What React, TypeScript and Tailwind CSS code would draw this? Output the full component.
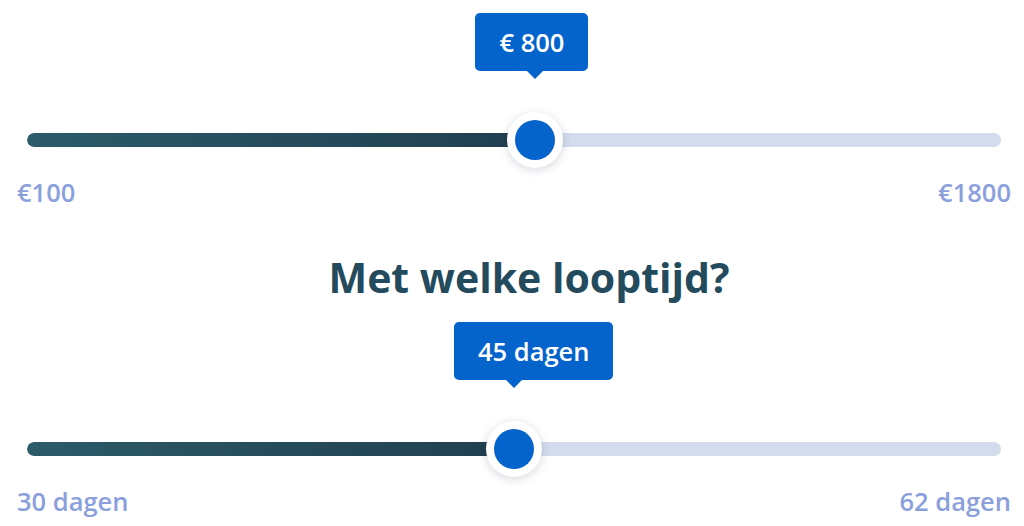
import React from 'react';

type SliderProps = {
    value: string;
    pct: number;
    min: string;
    max: string;
};

const Slider = ({ value, pct, min, max }: SliderProps) => {
    return (
        <div>
            <div className="relative mx-[10px] h-[56px] flex items-center">
                {/* Track */}
                <div className="w-full h-[14px] rounded-full bg-[#d3dcec] overflow-hidden">
                    <div
                        className="h-full rounded-full bg-gradient-to-r from-[#2c5b69] to-[#213f4e]"
                        style={{ width: `${pct}%` }}
                    />
                </div>

                {/* Tooltip - arrow sits 60px from its left edge */}
                <div
                    className="absolute bottom-full mb-[41px] -translate-x-[60px]"
                    style={{ left: `${pct}%` }}
                >
                    <div className="relative bg-[#0563cc] text-white text-[25.5px] leading-[32px] font-semibold px-[24px] py-[13px] rounded-[5px] whitespace-nowrap">
                        {value}
                        <span className="absolute left-[60px] -translate-x-1/2 top-full w-0 h-0 border-l-[8px] border-r-[8px] border-t-[8px] border-l-transparent border-r-transparent border-t-[#0563cc]" />
                    </div>
                </div>

                {/* Thumb */}
                <div
                    className="absolute top-1/2 -translate-x-1/2 -translate-y-1/2 w-[56px] h-[56px] rounded-full bg-white shadow-[0_2px_10px_rgba(20,40,70,0.18)] flex items-center justify-center"
                    style={{ left: `${pct}%` }}
                >
                    <div className="w-[40px] h-[40px] rounded-full bg-[#0563cc]" />
                </div>
            </div>

            {/* Min / Max labels */}
            <div className="mt-[8px] flex justify-between text-[25.5px] leading-[32px] font-semibold text-[#8a9fdc]">
                <span>{min}</span>
                <span>{max}</span>
            </div>
        </div>
    );
};

export default function App() {
    return (
        <div className="w-[1024px] h-[526px] bg-white overflow-hidden pl-[17px] pr-[13px] pt-[112px] font-['Open_Sans',sans-serif]">
            <Slider value="€ 800" pct={52.2} min="€100" max="€1800" />

            <h2 className="mt-[45px] pl-[30px] text-center text-[41px] leading-[48px] font-bold text-[#234b5d]">
                Met welke looptijd?
            </h2>

            <div className="mt-[120px]">
                <Slider value="45 dagen" pct={50} min="30 dagen" max="62 dagen" />
            </div>
        </div>
    );
}
